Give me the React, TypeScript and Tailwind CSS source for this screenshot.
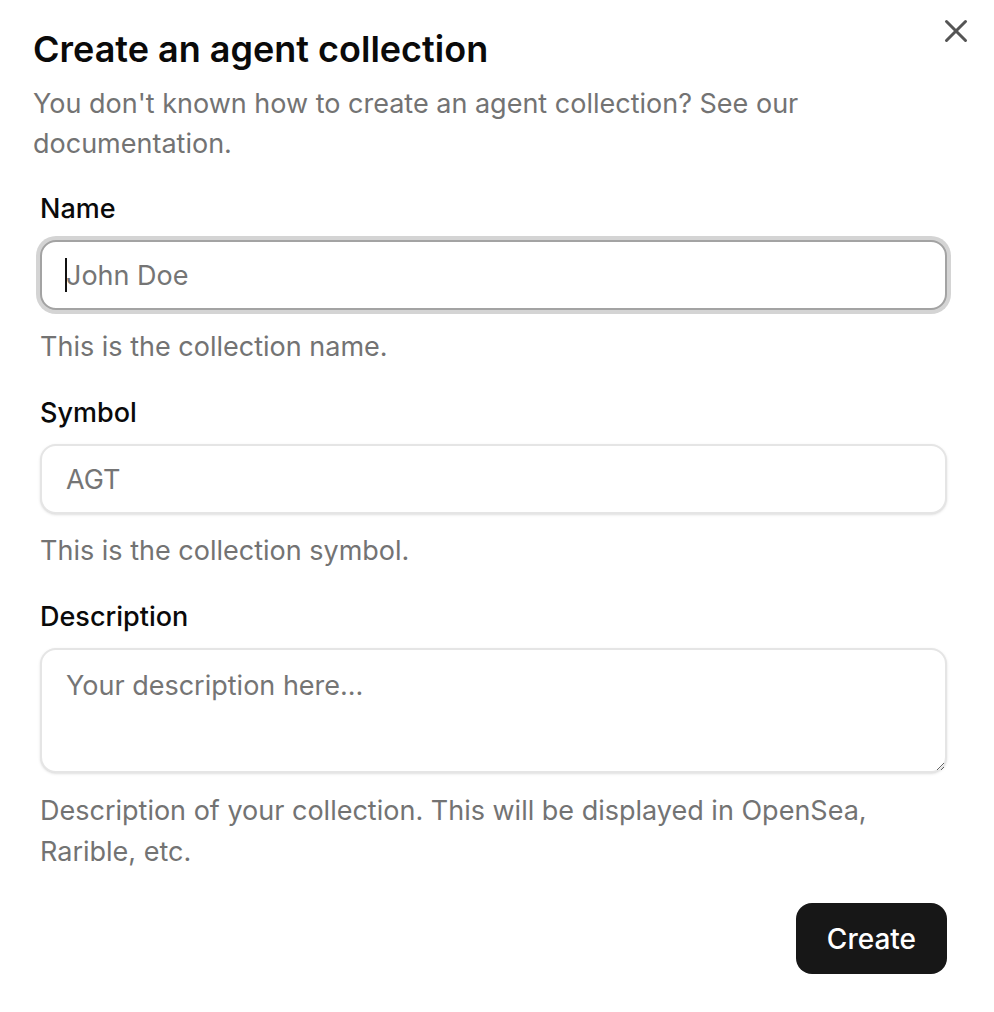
import React from "react";

export default function App() {
  const font = { fontFamily: "Inter, 'Noto Sans', sans-serif" };
  return (
    <div className="relative w-[994px] h-[1012px] bg-white text-[#0a0a0a]" style={font}>
      <button className="absolute left-[937px] top-[12px] w-[38px] h-[38px] flex items-center justify-center text-[#555555]">
        <svg width="38" height="38" viewBox="0 0 24 24" fill="none" stroke="currentColor" strokeWidth="1.9" strokeLinecap="round">
          <path d="M18 6 6 18" />
          <path d="m6 6 12 12" />
        </svg>
      </button>
      <div className="flex flex-col pl-[33px] pr-[47px] pt-[31px]">
        <h2 className="text-[36px] leading-[36px] font-semibold">Create an agent collection</h2>
        <p className="mt-[17px] text-[27px] leading-[40px] text-[#737373]">
          You don't known how to create an agent collection? See our documentation.
        </p>
        <form className="flex flex-col pl-[7px] mt-[31px]" onSubmit={(e) => e.preventDefault()}>
          <label className="text-[27px] leading-[28px] font-medium">Name</label>
          <div className="relative mt-[17px]">
            <input
              placeholder="John Doe"
              className="w-full h-[70px] rounded-[16px] border-2 border-[#a3a3a3] ring-[4px] ring-[#d4d4d4] px-[24px] text-[27px] placeholder:text-[#757575] outline-none bg-white"
            />
            <span className="absolute left-[25px] top-[18px] w-[2px] h-[34px] bg-[#111111]" />
          </div>
          <p className="mt-[17px] text-[27px] leading-[40px] text-[#737373]">This is the collection name.</p>

          <label className="mt-[32px] text-[27px] leading-[28px] font-medium">Symbol</label>
          <input
            placeholder="AGT"
            className="mt-[17px] w-full h-[70px] rounded-[16px] border-2 border-[#e5e5e5] shadow-sm px-[24px] text-[27px] placeholder:text-[#757575] outline-none bg-white"
          />
          <p className="mt-[17px] text-[27px] leading-[40px] text-[#737373]">This is the collection symbol.</p>

          <label className="mt-[32px] text-[27px] leading-[28px] font-medium">Description</label>
          <textarea
            placeholder="Your description here..."
            className="mt-[17px] w-full h-[125px] rounded-[16px] border-2 border-[#e5e5e5] shadow-sm px-[24px] py-[16px] text-[27px] leading-[40px] placeholder:text-[#757575] outline-none bg-white"
          />
          <p className="mt-[17px] text-[27px] leading-[41px] text-[#737373]">
            Description of your collection. This will be displayed in OpenSea, Rarible, etc.
          </p>
          <div className="flex justify-end mt-[31px]">
            <button className="h-[71px] px-[31px] rounded-[16px] bg-[#171717] text-white text-[28px] font-medium">Create</button>
          </div>
        </form>
      </div>
    </div>
  );
}
